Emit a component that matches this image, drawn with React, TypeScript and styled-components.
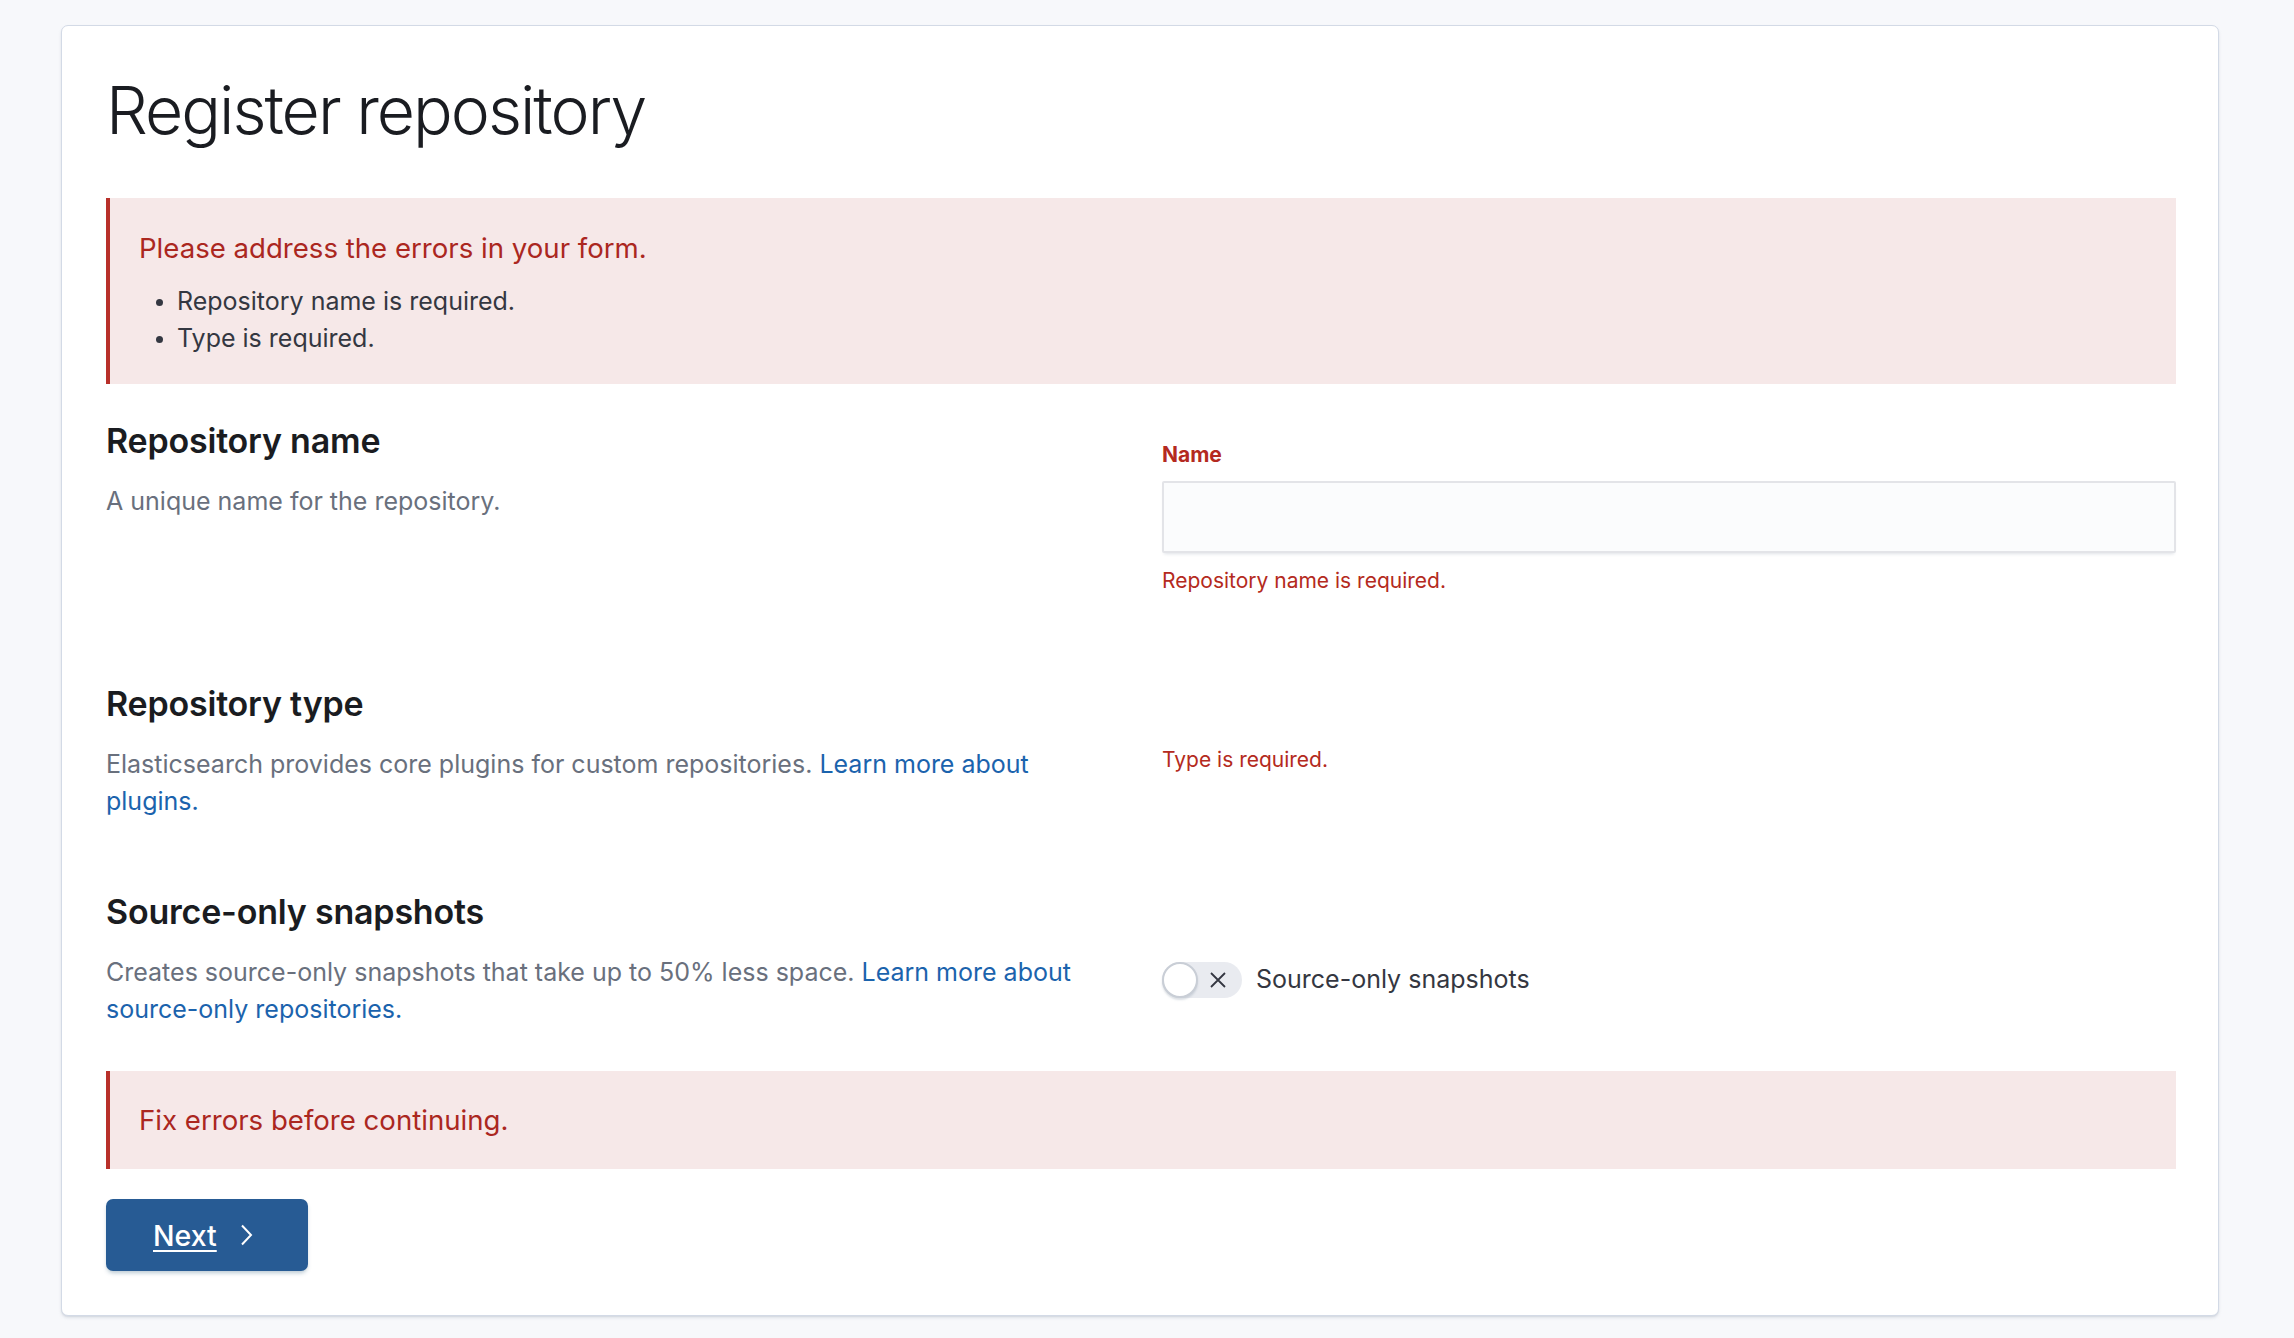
import React from "react";
import styled, { createGlobalStyle } from "styled-components";

const GlobalStyle = createGlobalStyle`
  * {
    box-sizing: border-box;
  }
  html,
  body {
    margin: 0;
    padding: 0;
    background: #f7f8fb;
  }
  body {
    font-family: Inter, "Noto Sans", "Liberation Sans", sans-serif;
    color: #343741;
    -webkit-font-smoothing: antialiased;
  }
`;

const Page = styled.div`
  padding: 25px 75px 24px 61px;
`;

const Panel = styled.div`
  background: #fff;
  border: 1px solid #d3dae6;
  border-radius: 7px;
  box-shadow: 0 2px 3px rgba(152, 162, 179, 0.25),
    0 1px 1px rgba(152, 162, 179, 0.15);
  padding: 44px 42px 44px 44px;
`;

const PageTitle = styled.h1`
  margin: 0;
  font-size: 66px;
  line-height: 80px;
  font-weight: 300;
  color: #1a1c21;
  letter-spacing: -2px;
`;

const Callout = styled.div<{ $pad: string; $top: number }>`
  margin-top: ${(p) => p.$top}px;
  background: #f6e8e8;
  border-left: 4px solid #b8302a;
  padding: ${(p) => p.$pad};
`;

const CalloutTitle = styled.div`
  font-size: 27.6px;
  line-height: 36px;
  color: #ab271f;
`;

const ErrorList = styled.ul`
  margin: 17px 0 0;
  padding-left: 38px;
  font-size: 25px;
  line-height: 37px;
  color: #343741;

  li::marker {
    font-size: 22px;
  }
`;

const Row = styled.div<{ $top: number }>`
  display: flex;
  gap: 42px;
  margin-top: ${(p) => p.$top}px;
`;

const TextColumn = styled.div`
  flex: 1 1 0;
  min-width: 0;
`;

const FieldColumn = styled.div<{ $pt: number }>`
  flex: 1 1 0;
  min-width: 0;
  padding-top: ${(p) => p.$pt}px;
`;

const SectionTitle = styled.h2`
  margin: 0;
  font-size: 34px;
  line-height: 42px;
  font-weight: 600;
  color: #1a1c21;
  letter-spacing: -0.2px;
`;

const Description = styled.p`
  margin: 21px 0 0;
  font-size: 25px;
  line-height: 36.6px;
  color: #69707d;
`;

const Link = styled.a`
  color: #1b63ad;
  text-decoration: none;
`;

const Label = styled.label`
  display: block;
  font-size: 21px;
  line-height: 30px;
  font-weight: 700;
  color: #b42a20;
`;

const TextInput = styled.input`
  display: block;
  width: 100%;
  height: 72px;
  margin-top: 10.6px;
  border: 2px solid #e3e4e8;
  border-radius: 2px;
  background: #fbfcfd;
  box-shadow: 0 3px 3px -2px rgba(152, 162, 179, 0.3);
  outline: none;
  font: inherit;
  font-size: 25px;
  padding: 0 20px;
`;

const ErrorText = styled.div<{ $top: number }>`
  margin-top: ${(p) => p.$top}px;
  font-size: 21px;
  line-height: 30px;
  color: #b42a20;
`;

const SwitchRow = styled.div`
  display: flex;
  align-items: center;
  gap: 14px;
  height: 37px;
`;

const Track = styled.span`
  position: relative;
  display: inline-flex;
  align-items: center;
  justify-content: flex-end;
  width: 80px;
  height: 36px;
  border-radius: 18px;
  background: #e9ebf0;
  padding-right: 15px;
`;

const Thumb = styled.span`
  position: absolute;
  left: 0;
  top: 0;
  width: 36px;
  height: 36px;
  border-radius: 50%;
  background: #fff;
  border: 2px solid #c9ced6;
  box-shadow: 0 2px 2px rgba(152, 162, 179, 0.35);
`;

const SwitchLabel = styled.span`
  font-size: 25px;
  line-height: 37px;
  color: #343741;
`;

const NextButton = styled.button`
  display: flex;
  align-items: center;
  gap: 23px;
  margin-top: 30px;
  width: 202px;
  height: 72px;
  padding: 0 0 0 47px;
  border: none;
  border-radius: 7px;
  background: #275b94;
  box-shadow: 0 3px 4px -1px rgba(54, 97, 126, 0.35);
  color: #fff;
  font-family: inherit;
  font-size: 28.5px;
  font-weight: 500;
  cursor: pointer;

  span {
    text-decoration: underline;
    text-decoration-thickness: 2px;
    text-underline-offset: 4px;
  }
`;

export default function App() {
  return (
    <>
      <GlobalStyle />
      <Page>
        <Panel>
          <PageTitle>Register repository</PageTitle>

          <Callout $top={48} $pad="32px 29px 27px 29px">
            <CalloutTitle>Please address the errors in your form.</CalloutTitle>
            <ErrorList>
              <li>Repository name is required.</li>
              <li>Type is required.</li>
            </ErrorList>
          </Callout>

          <Row $top={35.6}>
            <TextColumn>
              <SectionTitle>Repository name</SectionTitle>
              <Description>A unique name for the repository.</Description>
            </TextColumn>
            <FieldColumn $pt={20.8}>
              <Label htmlFor="repo-name">Name</Label>
              <TextInput id="repo-name" />
              <ErrorText $top={13.4}>Repository name is required.</ErrorText>
            </FieldColumn>
          </Row>

          <Row $top={86.8}>
            <TextColumn>
              <SectionTitle>Repository type</SectionTitle>
              <Description>
                Elasticsearch provides core plugins for custom repositories.{" "}
                <Link href="#">Learn more about plugins.</Link>
              </Description>
            </TextColumn>
            <FieldColumn $pt={61.8}>
              <ErrorText $top={0}>Type is required.</ErrorText>
            </FieldColumn>
          </Row>

          <Row $top={72}>
            <TextColumn>
              <SectionTitle>Source-only snapshots</SectionTitle>
              <Description>
                Creates source-only snapshots that take up to 50% less space.{" "}
                <Link href="#">Learn more about source-only repositories.</Link>
              </Description>
            </TextColumn>
            <FieldColumn $pt={70}>
              <SwitchRow>
                <Track>
                  <Thumb />
                  <svg width="18" height="18" viewBox="0 0 18 18">
                    <path
                      d="M2 2 L16 16 M16 2 L2 16"
                      stroke="#343741"
                      strokeWidth="1.8"
                      fill="none"
                    />
                  </svg>
                </Track>
                <SwitchLabel>Source-only snapshots</SwitchLabel>
              </SwitchRow>
            </FieldColumn>
          </Row>

          <Callout $top={43.6} $pad="31px 29px">
            <CalloutTitle>Fix errors before continuing.</CalloutTitle>
          </Callout>

          <NextButton>
            <span>Next</span>
            <svg width="13" height="22" viewBox="0 0 13 22">
              <path
                d="M2 1.5 L11 11 L2 20.5"
                stroke="#fff"
                strokeWidth="2"
                fill="none"
              />
            </svg>
          </NextButton>
        </Panel>
      </Page>
    </>
  );
}
